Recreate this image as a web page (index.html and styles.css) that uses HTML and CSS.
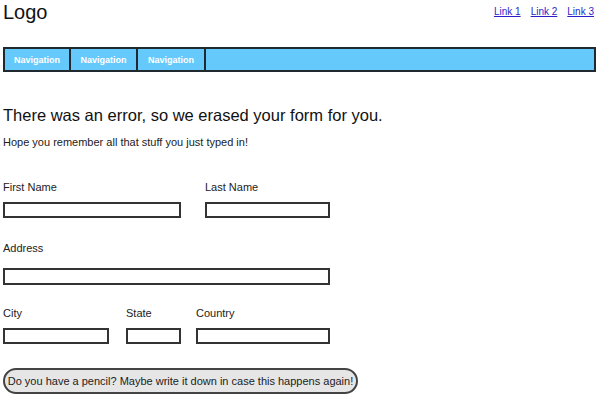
FILE: index.html
```html
<!DOCTYPE html>
<html>
<head>
<meta charset="utf-8">
<link rel="stylesheet" href="styles.css">
</head>
<body>
<header class="top">
  <div class="logo">Logo</div>
  <nav class="links">
    <a href="#">Link 1</a>
    <a href="#">Link 2</a>
    <a href="#">Link 3</a>
  </nav>
</header>
<nav class="navbar">
  <a class="nav-item" href="#">Navigation</a>
  <a class="nav-item" href="#">Navigation</a>
  <a class="nav-item" href="#">Navigation</a>
</nav>
<main class="content">
  <h1 class="title">There was an error, so we erased your form for you.</h1>
  <p class="sub">Hope you remember all that stuff you just typed in!</p>
  <div class="row row-names">
    <label class="field f-first"><span class="lbl">First Name</span><input class="inp" type="text"></label>
    <label class="field f-last"><span class="lbl">Last Name</span><input class="inp" type="text"></label>
  </div>
  <div class="row row-address">
    <label class="field f-address"><span class="lbl">Address</span><input class="inp" type="text"></label>
  </div>
  <div class="row row-city">
    <label class="field f-city"><span class="lbl">City</span><input class="inp" type="text"></label>
    <label class="field f-state"><span class="lbl">State</span><input class="inp" type="text"></label>
    <label class="field f-country"><span class="lbl">Country</span><input class="inp" type="text"></label>
  </div>
  <button class="pill" type="button">Do you have a pencil? Maybe write it down in case this happens again!</button>
</main>
</body>
</html>
```
FILE: styles.css
```css
* { box-sizing: border-box; }
html, body { margin: 0; padding: 0; background: #fff; }
body {
  font-family: "Liberation Sans", Arial, sans-serif;
  color: #222;
  padding: 0 4px 0 3px;
  width: 600px;
  height: 396px;
  overflow: hidden;
}
.top {
  display: flex;
  justify-content: space-between;
  align-items: flex-start;
  height: 47px;
}
.logo {
  font-size: 20px;
  line-height: 24px;
  color: #111;
}
.links {
  display: flex;
  gap: 10px;
  margin-top: 6px;
  margin-right: 2px;
  font-size: 10px;
}
.links a { color: #2a1fc8; text-decoration: underline; }
.navbar {
  display: flex;
  height: 25px;
  border: 2px solid #1e2a30;
  background: #66c9fb;
}
.nav-item {
  display: flex;
  align-items: center;
  justify-content: center;
  width: 67px;
  border-right: 2px solid #1e2a30;
  color: #fff;
  font-size: 9px;
  font-weight: bold;
  text-decoration: none;
}
.nav-item:first-child { width: 66px; }
.nav-item:last-child { width: 68px; }
.content { padding-top: 32px; }
.title {
  margin: 0;
  font-size: 16.5px;
  font-weight: normal;
  line-height: 22px;
  color: #111;
}
.sub {
  margin: 9px 0 0;
  font-size: 11px;
  line-height: 14px;
}
.row { display: flex; }
.row-names { margin-top: 31px; gap: 24px; }
.row-address { margin-top: 23px; }
.row-city { margin-top: 21px; }
.field { display: flex; flex-direction: column; }
.lbl { font-size: 11px; line-height: 14px; margin-bottom: 8px; }
.inp {
  height: 16px;
  border: 2px solid #333;
  border-radius: 0;
  background: #fff;
  padding: 0;
  margin: 0;
}
.f-first .inp { width: 178px; }
.f-last .inp { width: 125px; }
.f-address .inp { width: 327px; height: 17px; }
.f-city .inp { width: 106px; }
.f-state { margin-left: 17px; }
.f-state .inp { width: 55px; }
.f-country { margin-left: 15px; }
.f-country .inp { width: 134px; }
.row-address .lbl { margin-bottom: 13px; }
.pill {
  margin-top: 24px;
  display: block;
  width: 355px;
  height: 26px;
  border: 2px solid #444;
  border-radius: 13px;
  background: #e6e6e6;
  font-family: "Liberation Sans", Arial, sans-serif;
  font-size: 11px;
  color: #222;
  padding: 0;
}
```
